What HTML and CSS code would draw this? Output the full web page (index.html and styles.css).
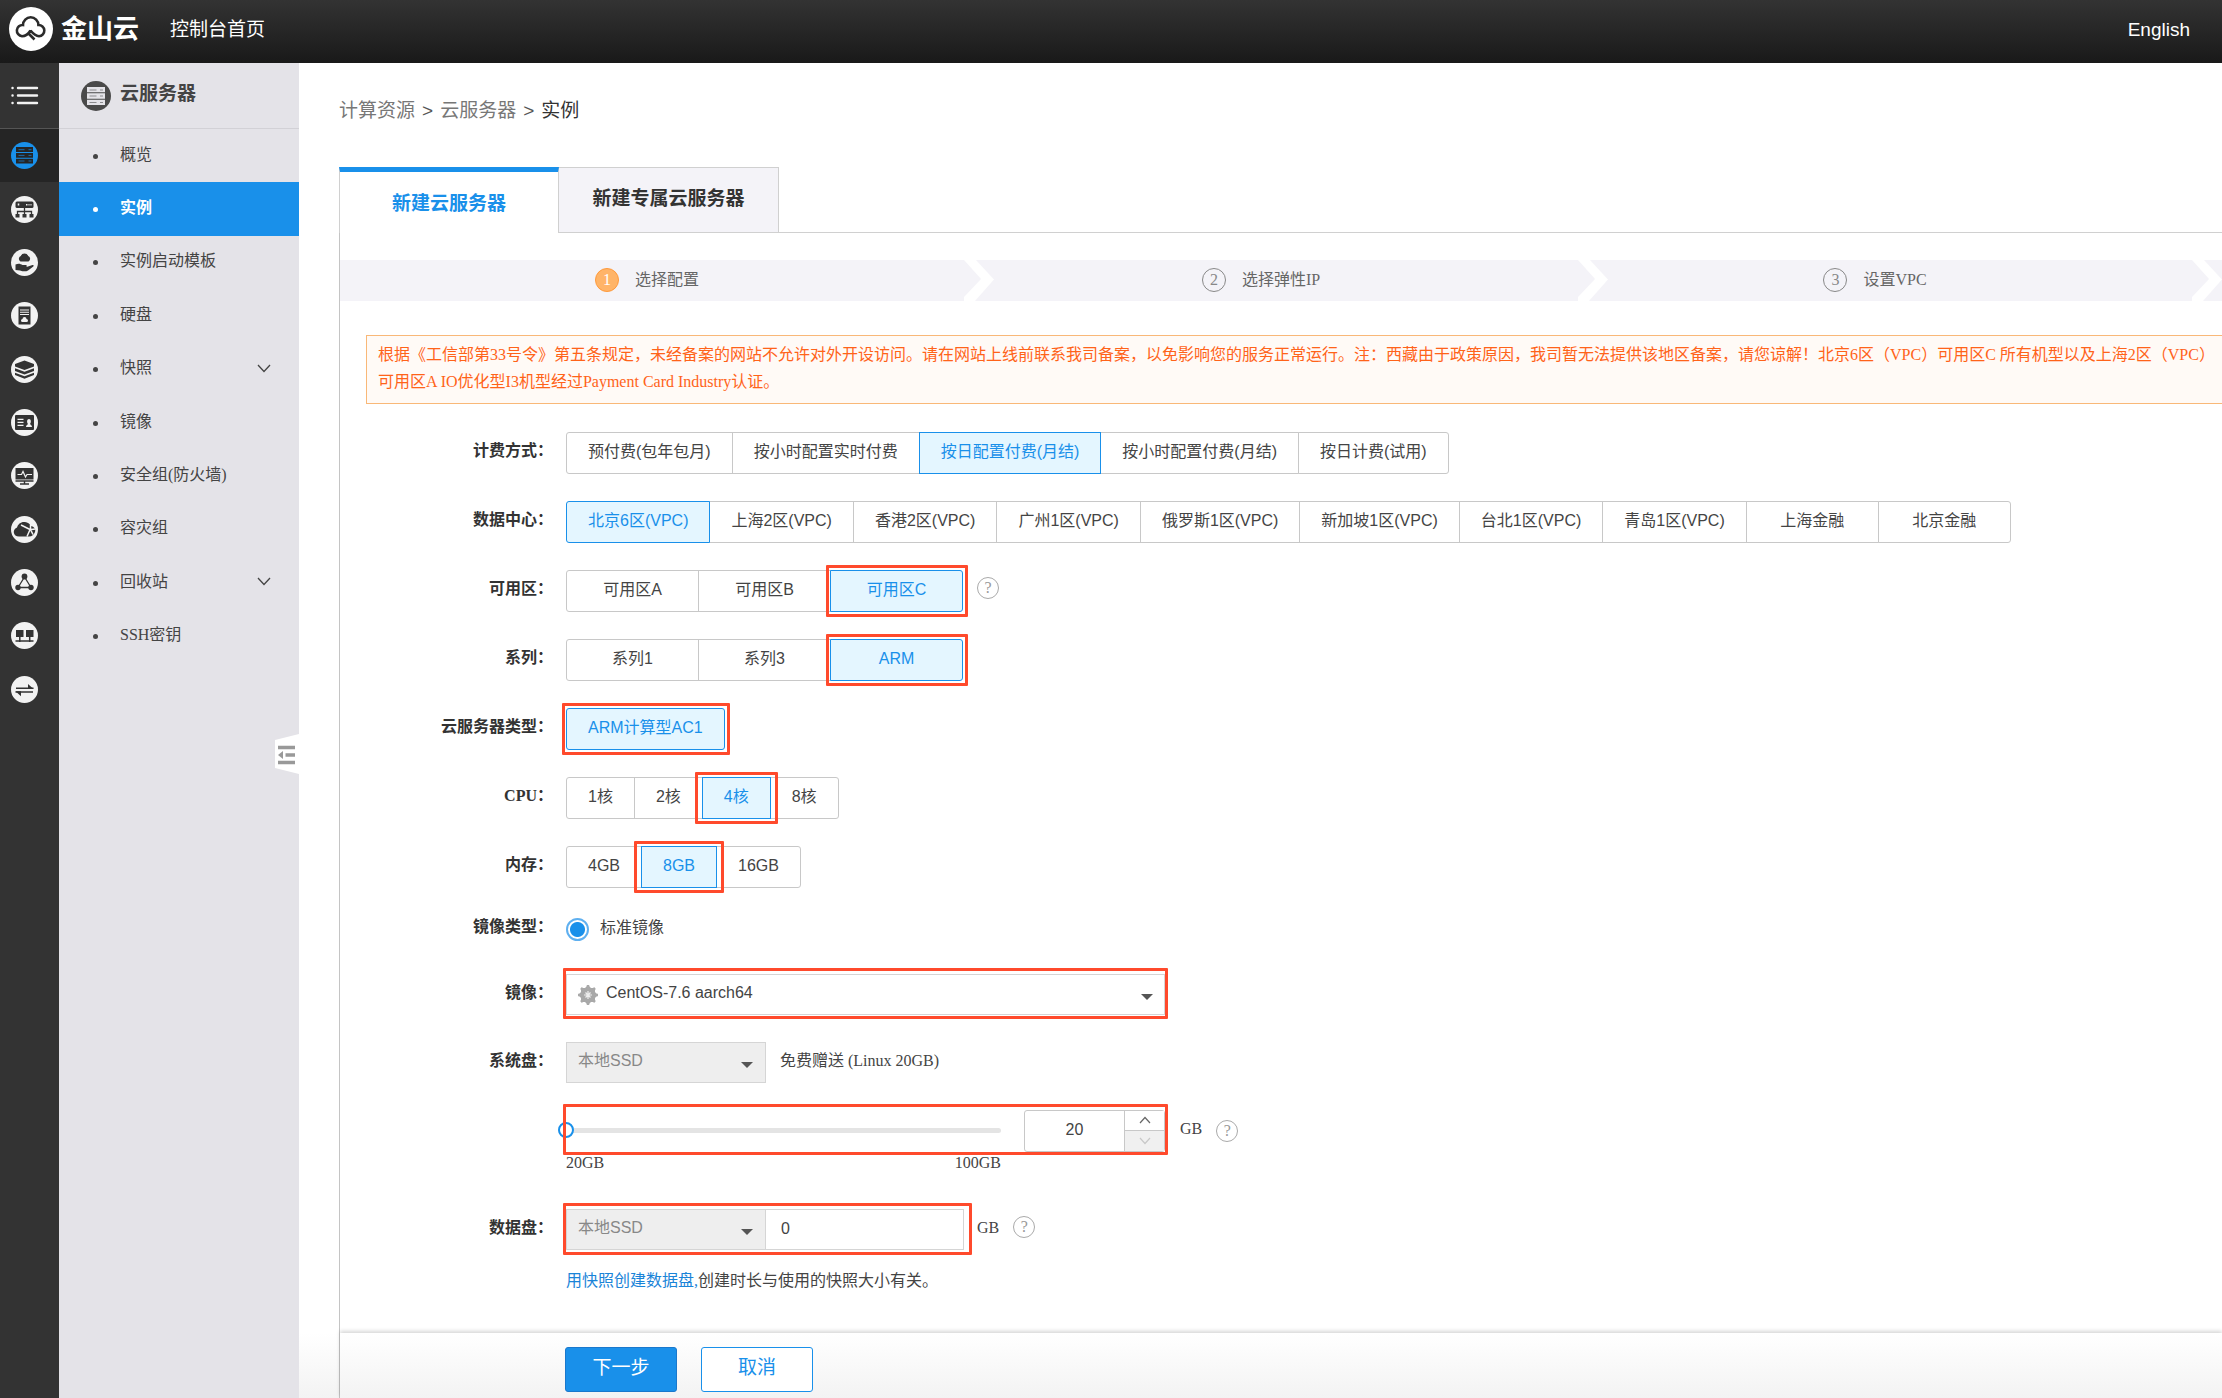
FILE: index.html
```html
<!DOCTYPE html>
<html lang="zh-CN">
<head>
<meta charset="utf-8">
<title>金山云 - 云服务器</title>
<meta name="viewport" content="width=device-width, initial-scale=1">
<link rel="stylesheet" href="styles.css">
</head>
<body>
<header class="topbar">
  <a class="brand" href="#">
    <svg class="brand-mark" viewBox="0 0 44 44" aria-hidden="true">
      <circle cx="22" cy="22" r="22" fill="#fff"/>
      <path d="M21.500 23.500C20 26 17 29.200 13 29.200A5.600 5.600 0 1 1 14 18A7.700 7.700 0 0 1 29.400 18A5.600 5.600 0 1 1 30 29.200C26.500 29 24 26.500 21.500 23.500M19.500 26.500L25.500 32.500" fill="none" stroke="#2b2b2b" stroke-width="2.600"/>
    </svg>
    <span class="brand-name">金山云</span>
  </a>
  <a class="top-link" href="#">控制台首页</a>
  <a class="top-link lang" href="#">English</a>
</header>

<div class="shell">
  <nav class="rail" aria-label="产品">
    <button class="rail-menu" type="button" aria-label="展开菜单">
      <svg width="28" height="20" viewBox="0 0 28 20"><g stroke="#f2f2f2" stroke-width="2.400" stroke-linecap="round"><path d="M1.500 2h.1M1.500 9.500h.1M1.500 17h.1M7 2h19M7 9.500h19M7 17h19"/></g></svg>
    </button>
    <ul class="rail-list">
      <li class="on"><a href="#" aria-label="云服务器"><svg viewBox="0 0 27 27"><circle cx="13.500" cy="13.500" r="13.500" fill="#1990ea"/><path d="M5 5h17v5H5zM5 11h17v4.700H5zM5 16.700h17v4.700H5z" fill="#252525"/><path d="M7.500 7.700h6M17.500 7.700h3M7.500 13.400h6M17.500 13.400h3M7.500 19h6M17.500 19h3" stroke="#1b6aa8"/></svg></a></li>
      <li><a href="#" aria-label="负载均衡"><svg viewBox="0 0 27 27"><circle cx="13.500" cy="13.500" r="13.500" fill="#f2f2f2"/><rect x="4.500" y="5.500" width="18" height="6.500" rx="1.500" fill="#333"/><path d="M7.500 7.500v2M15 8.700h1.500M17.500 8.700h1M19.500 8.700h1" stroke="#f2f2f2" stroke-width="1.500"/><path d="M13.500 12v7M6.500 19v-3.500h14V19" fill="none" stroke="#333" stroke-width="1.300"/><path d="M4.500 18h4v3.500h-4zM11.500 18h4v3.500h-4zM18.500 18h4v3.500h-4z" fill="#333"/></svg></a></li>
      <li><a href="#" aria-label="云托管"><svg viewBox="0 0 27 27"><circle cx="13.500" cy="13.500" r="13.500" fill="#f2f2f2"/><path d="M9.500 12.500a3 3 0 0 1 .3-5.500a4 4 0 0 1 7.400 0a3 3 0 0 1 .3 5.500zM4.500 15.500c3-1.500 5-.8 7 .5h3.500c1.500.5 1 2-.5 2H11h4.500l6-2c1.500-.2 1.500 1 .5 1.700l-5 3.800c-2 1.300-5 1-8 0l-4.500-.5z" fill="#333"/></svg></a></li>
      <li><a href="#" aria-label="物理机"><svg viewBox="0 0 27 27"><circle cx="13.500" cy="13.500" r="13.500" fill="#f2f2f2"/><path d="M7.500 4.500h12v18h-12z" fill="#333"/><path d="M9 8h9M9 10.300h9M9 12.500h9" stroke="#f2f2f2" stroke-width="1.100"/><path d="M11.500 20a1.500 1.500 0 0 1 0-3a2 2 0 0 1 4 0a1.500 1.500 0 0 1 0 3z" fill="#f2f2f2"/></svg></a></li>
      <li><a href="#" aria-label="存储"><svg viewBox="0 0 27 27"><circle cx="13.500" cy="13.500" r="13.500" fill="#f2f2f2"/><path d="M13.500 4.500L23 8v2.500L13.500 14L4 10.500V8zM4 12.300l9.500 3.500l9.500-3.500v2.800l-9.500 3.500L4 15.100zM4 16.700l9.500 3.500l9.500-3.500v2.300l-9.500 3.800L4 19z" fill="#333"/></svg></a></li>
      <li><a href="#" aria-label="镜像"><svg viewBox="0 0 27 27"><circle cx="13.500" cy="13.500" r="13.500" fill="#f2f2f2"/><rect x="4" y="6" width="19" height="15" rx="1" fill="#333"/><path d="M6.500 10.300h6M6.500 13.300h6M6.500 16.300h6" stroke="#f2f2f2" stroke-width="1.300"/><path d="M15 18c0-2 1.500-2 2-3c-1.500-2-1-5 1-5s2.500 3 1 5c.5 1 2 1 2 3z" fill="#f2f2f2"/></svg></a></li>
      <li><a href="#" aria-label="监控"><svg viewBox="0 0 27 27"><circle cx="13.500" cy="13.500" r="13.500" fill="#f2f2f2"/><path d="M4.500 6h18v11.500h-18z" fill="#333"/><path d="M6.500 12.500h4l1.500-3l2.500 5.500l1.500-2.500h5" fill="none" stroke="#f2f2f2" stroke-width="1.200"/><path d="M4.500 19h18M13.500 19v3M9 22h9" stroke="#333" stroke-width="1.400"/></svg></a></li>
      <li><a href="#" aria-label="云网络"><svg viewBox="0 0 27 27"><circle cx="13.500" cy="13.500" r="13.500" fill="#f2f2f2"/><path d="M8 20.500c-6 0-7-7-2-9c1-3.500 4-6 8-5.500c3 .3 4.500 1.500 5.500 4c4 .5 5.500 3.500 4.500 6s-3 4.500-6 4.500z" fill="#333"/><path d="M10 9l9 4.500M24 13l-5 .8l-3 6.700M19.500 9v4.500l2.500 5" fill="none" stroke="#f2f2f2" stroke-width="1.500"/></svg></a></li>
      <li><a href="#" aria-label="关系网络"><svg viewBox="0 0 27 27"><circle cx="13.500" cy="13.500" r="13.500" fill="#f2f2f2"/><path d="M13.500 8L7 18.500h13z" fill="none" stroke="#333" stroke-width="1.300"/><g fill="#333"><circle cx="13.500" cy="7.500" r="2.900"/><circle cx="7" cy="18.500" r="2.700"/><circle cx="20" cy="18.500" r="2.700"/></g></svg></a></li>
      <li><a href="#" aria-label="对等连接"><svg viewBox="0 0 27 27"><circle cx="13.500" cy="13.500" r="13.500" fill="#f2f2f2"/><path d="M5 8h7.500v7H5zM15 8h7.500v7H15z" fill="#333"/><path d="M4.500 19h18M8.800 15v5M18.700 15v5" stroke="#333" stroke-width="1.500"/></svg></a></li>
      <li><a href="#" aria-label="迁移"><svg viewBox="0 0 27 27"><circle cx="13.500" cy="13.500" r="13.500" fill="#f2f2f2"/><path d="M5 12.300h17.500M4.500 16h17.500" stroke="#333" stroke-width="1.500"/><path d="M17 8l5.500 5H17zM10 20.300L4.500 15.300H10z" fill="#333"/></svg></a></li>
    </ul>
  </nav>

  <aside class="sidebar">
    <h2 class="side-title">
      <svg width="30" height="30" viewBox="0 0 30 30" aria-hidden="true"><circle cx="15" cy="15" r="15" fill="#4a4a4a"/><path d="M6 6h18v5.300H6zM6 12.300h18v5.400H6zM6 18.700h18V24H6z" fill="#e4e3e8"/><path d="M8.500 9h7M19 9h3M8.500 15h7M19 15h3M8.500 21.500h7M19 21.500h3" stroke="#8b8b8e"/></svg>
      <span>云服务器</span>
    </h2>
    <ul class="side-list">
      <li><a href="#">概览</a></li>
      <li class="on"><a href="#">实例</a></li>
      <li><a href="#">实例启动模板</a></li>
      <li><a href="#">硬盘</a></li>
      <li><a href="#">快照<svg class="caret" viewBox="0 0 14 9"><path d="M1 1l6 6.500L13 1" fill="none" stroke="#444" stroke-width="1.300"/></svg></a></li>
      <li><a href="#">镜像</a></li>
      <li><a href="#">安全组(防火墙)</a></li>
      <li><a href="#">容灾组</a></li>
      <li><a href="#">回收站<svg class="caret" viewBox="0 0 14 9"><path d="M1 1l6 6.500L13 1" fill="none" stroke="#444" stroke-width="1.300"/></svg></a></li>
      <li><a href="#">SSH密钥</a></li>
    </ul>
    <button class="collapse" type="button" aria-label="收起菜单">
      <svg width="24" height="40" viewBox="0 0 24 40"><path d="M0 6L24 0v40L0 34z" fill="#fff"/><path d="M3 13.500h17M10.500 21h9.500M3 28.500h17" stroke="#999" stroke-width="3.400"/><path d="M3 21l5-4v8z" fill="#999"/></svg>
    </button>
  </aside>

  <main class="main">
    <nav class="crumbs" aria-label="位置"><a href="#">计算资源</a><span>&gt;</span><a href="#">云服务器</a><span>&gt;</span><b>实例</b></nav>

    <div class="tabs">
      <button class="tab on" type="button">新建云服务器</button>
      <button class="tab" type="button">新建专属云服务器</button>
    </div>

    <section class="panel">
      <ol class="steps">
        <li class="now"><i>1</i>选择配置<svg class="chev" viewBox="0 0 30 41"><path d="M0 0h12l18 19.500L11 41H0v-4l17-18z" fill="#fff"/></svg></li>
        <li><i>2</i>选择弹性IP<svg class="chev" viewBox="0 0 30 41"><path d="M0 0h12l18 19.500L11 41H0v-4l17-18z" fill="#fff"/></svg></li>
        <li><i>3</i>设置VPC<svg class="chev" viewBox="0 0 30 41"><path d="M0 0h12l18 19.500L11 41H0v-4l17-18z" fill="#fff"/></svg></li>
      </ol>

      <p class="notice">根据《工信部第33号令》第五条规定，未经备案的网站不允许对外开设访问。请在网站上线前联系我司备案，以免影响您的服务正常运行。注：西藏由于政策原因，我司暂无法提供该地区备案，请您谅解！北京6区（VPC）可用区C 所有机型以及上海2区（VPC）可用区A IO优化型I3机型经过Payment Card Industry认证。</p>

      <form class="form">
        <div class="row">
          <span class="label" id="l-bill">计费方式：</span>
          <div class="seg" role="group" aria-labelledby="l-bill">
            <button type="button">预付费(包年包月)</button><button type="button">按小时配置实时付费</button><button type="button" class="on">按日配置付费(月结)</button><button type="button">按小时配置付费(月结)</button><button type="button">按日计费(试用)</button>
          </div>
        </div>
        <div class="row">
          <span class="label" id="l-dc">数据中心：</span>
          <div class="seg wide" role="group" aria-labelledby="l-dc">
            <button type="button" class="on">北京6区(VPC)</button><button type="button">上海2区(VPC)</button><button type="button">香港2区(VPC)</button><button type="button">广州1区(VPC)</button><button type="button">俄罗斯1区(VPC)</button><button type="button">新加坡1区(VPC)</button><button type="button">台北1区(VPC)</button><button type="button">青岛1区(VPC)</button><button type="button">上海金融</button><button type="button">北京金融</button>
          </div>
        </div>
        <div class="row">
          <span class="label" id="l-az">可用区：</span>
          <div class="field">
            <div class="seg wide" role="group" aria-labelledby="l-az">
              <button type="button">可用区A</button><button type="button">可用区B</button><button type="button" class="on marked">可用区C</button>
            </div>
            <button class="help raised" type="button">?</button>
          </div>
        </div>
        <div class="row">
          <span class="label" id="l-series">系列：</span>
          <div class="seg wide" role="group" aria-labelledby="l-series">
            <button type="button">系列1</button><button type="button">系列3</button><button type="button" class="on marked">ARM</button>
          </div>
        </div>
        <div class="row">
          <span class="label" id="l-type">云服务器类型：</span>
          <div class="seg wide" role="group" aria-labelledby="l-type">
            <button type="button" class="on marked">ARM计算型AC1</button>
          </div>
        </div>
        <div class="row">
          <span class="label" id="l-cpu">CPU：</span>
          <div class="seg" role="group" aria-labelledby="l-cpu">
            <button type="button">1核</button><button type="button">2核</button><button type="button" class="on marked loose">4核</button><button type="button">8核</button>
          </div>
        </div>
        <div class="row">
          <span class="label" id="l-mem">内存：</span>
          <div class="seg" role="group" aria-labelledby="l-mem">
            <button type="button">4GB</button><button type="button" class="on marked loose">8GB</button><button type="button">16GB</button>
          </div>
        </div>
        <div class="row radio-row">
          <span class="label">镜像类型：</span>
          <label class="radio"><input type="radio" name="image-type" checked>标准镜像</label>
        </div>
        <div class="row">
          <label class="label" for="image">镜像：</label>
          <div class="select image-select marked">
            <svg class="gear" viewBox="0 0 22 22" aria-hidden="true"><g fill="#a9a9a9"><rect x="4" y="4" width="14" height="14"/><rect x="4" y="4" width="14" height="14" transform="rotate(45 11 11)"/></g><path d="M11 1v20M1 11h20M4 4l14 14M18 4L4 18" stroke="#a9a9a9" stroke-width="2.500"/><path d="M11 7v8M7 11h8M8.500 8.500l5 5M13.500 8.500l-5 5" stroke="#eee" stroke-width="1.200"/></svg>
            <select id="image"><option>CentOS-7.6 aarch64</option></select>
          </div>
        </div>
        <div class="row">
          <label class="label" for="sys-disk">系统盘：</label>
          <div class="field">
            <div class="select"><select id="sys-disk" disabled><option>本地SSD</option></select></div>
            <span class="gift">免费赠送 (Linux 20GB)</span>
          </div>
        </div>
        <div class="row">
          <span class="label"></span>
          <div>
            <div class="field">
              <div class="slide-box marked">
                <input class="range" type="range" min="20" max="100" value="20" aria-label="系统盘容量">
                <div class="stepper">
                  <input type="text" value="20" aria-label="系统盘容量 GB">
                  <div class="arrows">
                    <button type="button" aria-label="增加"><svg viewBox="0 0 12 8"><path d="M1 7l5-5.500L11 7" fill="none" stroke="#666" stroke-width="1.200"/></svg></button>
                    <button type="button" aria-label="减少" disabled><svg viewBox="0 0 12 8"><path d="M1 1l5 5.500L11 1" fill="none" stroke="#c8c8c8" stroke-width="1.200"/></svg></button>
                  </div>
                </div>
              </div>
              <span class="unit">GB</span>
              <button class="help" type="button">?</button>
            </div>
            <div class="scale"><span>20GB</span><span>100GB</span></div>
          </div>
        </div>
        <div class="row">
          <label class="label" for="data-disk">数据盘：</label>
          <div>
            <div class="field">
              <div class="data-box marked">
                <div class="select"><select id="data-disk" disabled><option>本地SSD</option></select></div>
                <input class="size" type="text" value="0" aria-label="数据盘容量 GB">
              </div>
              <span class="unit near">GB</span>
              <button class="help raised" type="button">?</button>
            </div>
            <p class="hint"><a href="#">用快照创建数据盘,</a>创建时长与使用的快照大小有关。</p>
          </div>
        </div>
      </form>

      <footer class="actions">
        <button class="btn primary" type="button">下一步</button>
        <button class="btn" type="button">取消</button>
      </footer>
    </section>
  </main>
</div>
</body>
</html>
```

FILE: styles.css
```css
:root {
  --blue: #1990ea;
  --line: #c8c8c8;
  --sans: "Liberation Sans", "Noto Sans CJK SC", sans-serif;
  --serif: "Liberation Serif", "Noto Sans CJK SC", serif;
}

* { box-sizing: border-box; }

body {
  margin: 0;
  min-height: 100vh;
  display: flex;
  flex-direction: column;
  overflow-x: hidden;
  background: #fff;
  color: #444;
  font: 16px/24px var(--serif);
}

a { color: inherit; text-decoration: none; }
ul, ol, p, h2 { margin: 0; padding: 0; list-style: none; }
button, input, select { font: 16px/24px var(--sans); color: #444; margin: 0; border-radius: 0; }
button { cursor: pointer; }
svg { display: block; }

/* top bar */
.topbar {
  height: 63px;
  padding: 0 32px 5px 9px;
  display: flex;
  align-items: center;
  background: linear-gradient(#333, #191919);
  color: #fff;
  font: 19px/24px var(--sans);
}
.brand { display: flex; align-items: center; gap: 8px; }
.brand-mark { width: 44px; height: 44px; }
.brand-name { font-size: 26px; font-weight: 700; }
.top-link { margin-left: 31px; padding-top: 2px; }
.lang { margin-left: auto; }

.shell { flex: 1; display: flex; }

/* icon rail */
.rail { width: 59px; flex: none; background: #333; }
.rail-menu {
  display: block;
  width: 100%;
  height: 66px;
  padding: 0 0 0 11px;
  border: 0;
  border-bottom: 1px solid #555;
  background: none;
}
.rail-list { display: grid; grid-template-rows: repeat(11, 1fr); height: 587px; }
.rail-list a { height: 100%; display: flex; align-items: center; padding-left: 11px; }
.rail-list svg { width: 27px; height: 27px; }
.rail-list .on { background: #252525; }

/* sidebar */
.sidebar { position: relative; width: 240px; flex: none; background: #e4e3e8; }
.side-title {
  height: 66px;
  padding-left: 22px;
  display: flex;
  align-items: center;
  gap: 9px;
  border-bottom: 1px solid #d2d1d6;
  font: 700 19px/24px var(--sans);
}
.side-title span { padding-bottom: 4px; }
.side-list { display: grid; grid-template-rows: repeat(10, 1fr); height: 534px; }
.side-list a {
  height: 100%;
  padding: 0 28px 2px 34px;
  display: flex;
  align-items: center;
}
.side-list a::before {
  content: "";
  width: 5px;
  height: 5px;
  margin: 3px 22px 0 0;
  border-radius: 50%;
  background: currentColor;
}
.side-list .on { background: var(--blue); color: #fff; font-weight: 700; }
.caret { width: 14px; height: 9px; margin-left: auto; }
.collapse {
  position: absolute;
  right: 0;
  top: 671px;
  padding: 0;
  border: 0;
  background: none;
}

/* main column */
.main {
  flex: 1;
  min-width: 0;
  display: flex;
  flex-direction: column;
  padding: 36px 0 0 40px;
  background: linear-gradient(#fff, #f3f3f3) bottom / 100% 65px no-repeat;
}
.crumbs { display: flex; gap: 7px; font: 19px/24px var(--sans); color: #777; }
.crumbs span { color: #555; }
.crumbs b { color: #333; font-weight: 400; }

.tabs { display: flex; margin-top: 44px; }
.tabs::after { content: ""; flex: 1; border-bottom: 1px solid #d0d0d0; }
.tab {
  width: 220px;
  height: 66px;
  padding: 0 0 2px;
  border: 1px solid #d0d0d0;
  border-left: 0;
  background: #f4f3f8;
  font: 700 19px/24px var(--sans);
  color: #333;
}
.tab.on {
  padding: 2px 0 0;
  border-left: 1px solid #d0d0d0;
  border-right: 1px solid #d0d0d0;
  border-top: 5px solid var(--blue);
  border-bottom: 0;
  background: #fff;
  color: var(--blue);
}

.panel {
  flex: 1;
  display: flex;
  flex-direction: column;
  padding-top: 27px;
  border-left: 1px solid #c4c4c4;
}
.steps {
  display: flex;
  padding-right: 40px;
  background: #f4f3f8;
  overflow: hidden;
  color: #666;
}
.steps li {
  position: relative;
  flex: 1;
  height: 41px;
  padding-bottom: 2px;
  display: flex;
  align-items: center;
  justify-content: center;
}
.steps i {
  width: 24px;
  height: 24px;
  margin-right: 16px;
  border: 1px solid #888;
  border-radius: 50%;
  font-style: normal;
  line-height: 22px;
  text-align: center;
  color: #888;
}
.steps .now i { background: #ffb468; border-color: #ff9a3c; color: #fff; }
.chev { position: absolute; right: -40px; top: 0; width: 30px; height: 41px; }

.notice {
  margin: 34px 0 0 26px;
  padding: 5px 12px 8px 11px;
  border: 1px solid #f9b878;
  border-right: 0;
  background: #fffaf6;
  color: #ff6319;
  line-height: 27px;
}

/* form */
.form { display: grid; gap: 27px; padding: 28px 0 24px; }
.row { display: grid; grid-template-columns: 213px 1fr; gap: 13px; align-items: start; }
.label { text-align: right; font-weight: 700; color: #333; line-height: 38px; }
.field { display: flex; align-items: center; }

.seg { display: flex; }
.seg button {
  position: relative;
  height: 42px;
  padding: 0 21px 3px;
  border: 1px solid var(--line);
  background: #fff;
  white-space: nowrap;
}
.seg button + button { margin-left: -1px; }
.seg.wide button { min-width: 133px; }
.seg button:first-child { border-radius: 3px 0 0 3px; }
.seg button:last-child { border-radius: 0 3px 3px 0; }
.seg button:only-child { border-radius: 3px; }
.seg .on { z-index: 1; background: #e4f6ff; border-color: var(--blue); color: var(--blue); }

.marked { position: relative; }
.marked::after {
  content: "";
  position: absolute;
  inset: -6px -6px -6px -5px;
  border: 3px solid #ff4a2c;
  border-radius: 1px;
  pointer-events: none;
}
.marked.loose::after { inset: -6px -8px; }

.help {
  width: 22px;
  height: 22px;
  margin-left: 14px;
  padding: 0;
  border: 1px solid #aaa;
  border-radius: 50%;
  background: #fff;
  color: #999;
  font: 16px/20px var(--serif);
}
.help.raised { margin-bottom: 6px; }

.radio-row { min-height: 32px; }
.radio-row .label { line-height: 24px; }
.radio { display: flex; align-items: center; gap: 11px; }
.radio input {
  appearance: none;
  width: 23px;
  height: 23px;
  margin-top: 3px;
  border: 2px solid #5fb0f0;
  border-radius: 50%;
  background: radial-gradient(circle, var(--blue) 7px, #fff 8px);
}

.select { position: relative; width: 200px; }
.select::before {
  content: "";
  position: absolute;
  right: 13px;
  top: 20px;
  border: 6px solid transparent;
  border-top-color: #555;
  border-bottom: 0;
  pointer-events: none;
}
select {
  appearance: none;
  display: block;
  width: 100%;
  height: 41px;
  padding: 0 24px 3px 11px;
  border: 1px solid #d5d5d5;
  background: #fff;
}
select:disabled { background: #eee; color: #888; opacity: 1; }
.image-select { width: 599px; }
.image-select::before { right: 12px; }
.image-select select { padding-left: 39px; }
.gear { position: absolute; left: 11px; top: 10px; width: 22px; height: 22px; }
.image-select::after, .slide-box::after, .data-box::after { inset: -6px -3px -4px -3px; }
.gift { margin-left: 14px; padding-bottom: 4px; }

.slide-box { display: flex; align-items: center; width: 599px; height: 41px; }
.range {
  appearance: none;
  width: 443px;
  height: 16px;
  margin-left: -8px;
  background: none;
}
.range::-webkit-slider-runnable-track { height: 5px; border-radius: 3px; background: #e4e4e4; }
.range::-webkit-slider-thumb {
  appearance: none;
  width: 16px;
  height: 16px;
  margin-top: -6px;
  border: 2px solid var(--blue);
  border-radius: 50%;
  background: #fff;
}
.stepper { display: flex; width: 141px; height: 42px; margin-left: auto; border: 1px solid var(--line); border-radius: 3px; }
.stepper input { width: 99px; padding: 0 0 2px; border: 0; background: none; text-align: center; }
.arrows { flex: 1; display: flex; flex-direction: column; border-left: 1px solid var(--line); }
.arrows button { flex: 1; padding: 0; border: 0; background: #fff; }
.arrows button:disabled { border-top: 1px solid var(--line); background: #f0f0f0; }
.arrows svg { width: 12px; height: 8px; margin: auto; }
.unit { margin-left: 15px; padding-bottom: 3px; }
.unit.near { margin-left: 13px; }
.scale { display: flex; justify-content: space-between; width: 435px; padding-bottom: 7px; }

.data-box { display: flex; width: 398px; }
.data-box::after { inset: -6px -8px -5px -3px; }
.size { flex: 1; min-width: 0; height: 41px; padding: 0 15px 2px; border: 1px solid #d5d5d5; border-left: 0; }
.hint { margin-top: 19px; }
.hint a { color: #1a84d8; }

/* action bar */
.actions {
  display: flex;
  gap: 24px;
  margin-top: auto;
  padding: 14px 0 6px 225px;
  background: linear-gradient(#fff, #f3f3f3);
  box-shadow: 0 -2px 4px rgba(0, 0, 0, .16);
}
.btn {
  width: 112px;
  height: 45px;
  padding: 0 0 3px;
  border: 1px solid var(--blue);
  border-radius: 3px;
  background: #fff;
  color: var(--blue);
  font: 19px/24px var(--sans);
}
.btn.primary { background: var(--blue); border-color: #1a78cc; color: #fff; }
```
